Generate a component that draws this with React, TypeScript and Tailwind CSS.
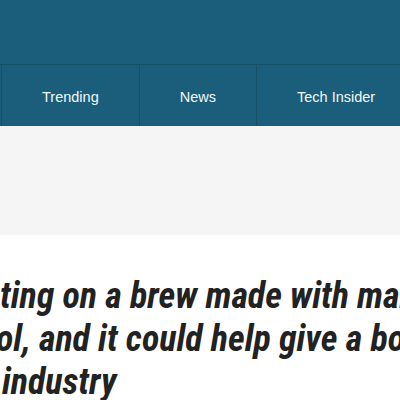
const navItems = ["Trending", "News", "Tech Insider"];

export default function App() {
  return (
    <div className="h-[400px] w-[400px] overflow-hidden bg-white">
      <header className="bg-[#1a5e7b]">
        <div className="h-16" />
        <nav className="flex h-[62px] border-t border-[#155069] pl-px font-['Liberation_Sans',Arial,sans-serif] text-[14.5px] text-[#f2f7fa]">
          {navItems.map((item) => (
            <a
              key={item}
              href="#"
              className="flex shrink-0 items-center border-l border-[#155069] px-10 pt-[4px] whitespace-nowrap"
            >
              {item}
            </a>
          ))}
        </nav>
      </header>

      <div className="h-[109px] bg-[#f5f5f5]" />

      <h1 className="mt-[40px] font-['Roboto',sans-serif] text-[36px] leading-[43px] font-bold text-[#222] italic [font-stretch:condensed]">
        <span className="block whitespace-nowrap">ting on a brew made with marijuana</span>
        <span className="-ml-[4px] block whitespace-nowrap">ol, and it could help give a boost to the</span>
        <span className="ml-[2px] block whitespace-nowrap">industry</span>
      </h1>
    </div>
  );
}
